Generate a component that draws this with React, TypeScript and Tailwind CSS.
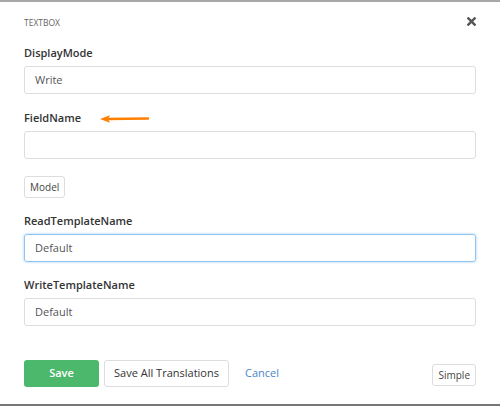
import * as React from "react"

const Label: React.FC<{ children: React.ReactNode }> = ({ children }) => (
  <div className="text-[11px] leading-[18px] font-semibold text-[#333] mb-1">{children}</div>
)

const Field: React.FC<{ value?: string; focused?: boolean }> = ({ value = "", focused }) => (
  <div
    className={
      focused
        ? "h-[28px] rounded-[3px] border border-[#8fc3f2] shadow-[0_0_3px_rgba(102,175,233,0.6)] px-[10px] flex items-center text-[11px] text-[#555]"
        : "h-[28px] rounded-[3px] border border-[#ddd] px-[10px] flex items-center text-[11px] text-[#555]"
    }
  >
    {value}
  </div>
)

export default function App() {
  return (
    <div className="w-[500px] h-[406px] bg-white border-t-2 border-t-[#a8a8a8] border-b-2 border-b-[#777] flex flex-col px-6 pt-[15px] font-['Open_Sans',sans-serif] relative">
      <div className="flex items-center justify-between h-[12px]">
        <span className="text-[8.5px] leading-[12px] text-[#666] uppercase">Textbox</span>
        <svg width="9" height="9" viewBox="0 0 10 10" className="-mt-[4px]">
          <path d="M1.5 1.5 L8.5 8.5 M8.5 1.5 L1.5 8.5" stroke="#555" strokeWidth="2.6" strokeLinecap="square" />
        </svg>
      </div>

      <div className="mt-[15px]">
        <Label>DisplayMode</Label>
        <Field value="Write" />
      </div>

      <div className="mt-[15px]">
        <div className="flex items-center">
          <Label>FieldName</Label>
          <svg width="50" height="10" viewBox="0 0 50 10" className="ml-[19px] -mt-[3px]">
            <path d="M8 5 L48 4.5" stroke="#ff7f00" strokeWidth="2.4" strokeLinecap="round" />
            <path d="M0 5 L10 1.2 L8 5 L10 8.8 Z" fill="#ff7f00" />
          </svg>
        </div>
        <Field />
      </div>

      <div className="mt-[17px] flex">
        <button className="h-[22px] px-[5px] rounded-[3px] border border-[#ddd] bg-white text-[10px] text-[#444] leading-none">
          Model
        </button>
      </div>

      <div className="mt-[14px]">
        <Label>ReadTemplateName</Label>
        <Field value="Default" focused />
      </div>

      <div className="mt-[14px]">
        <Label>WriteTemplateName</Label>
        <Field value="Default" />
      </div>

      <div className="mt-[34px] flex items-center">
        <button className="w-[75px] h-[27px] rounded-[3px] bg-[#4cb86b] text-white text-[11px] font-semibold">
          Save
        </button>
        <button className="ml-[5px] w-[125px] h-[27px] rounded-[3px] border border-[#ddd] bg-white text-[11px] text-[#333] whitespace-nowrap">
          Save All Translations
        </button>
        <span className="ml-[16px] text-[11px] text-[#4a86c8]">Cancel</span>
        <button className="ml-auto mt-[3px] h-[22px] px-[5px] rounded-[3px] border border-[#ddd] bg-white text-[10px] text-[#444] leading-none">
          Simple
        </button>
      </div>
    </div>
  )
}
